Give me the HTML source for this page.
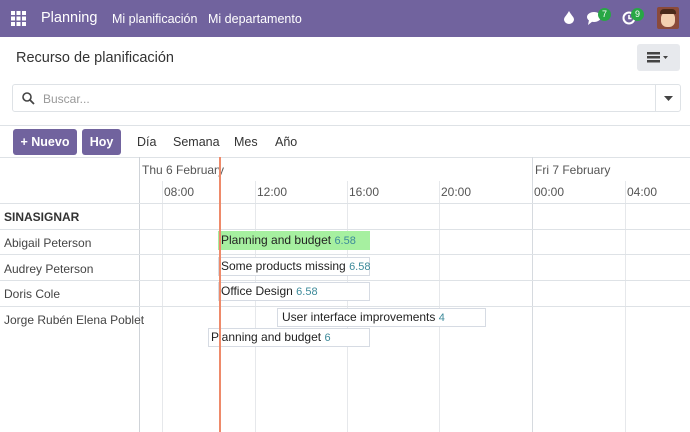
<!DOCTYPE html>
<html><head><meta charset="utf-8"><style>
*{box-sizing:border-box;margin:0;padding:0}
body{width:690px;height:432px;overflow:hidden;font-family:"Liberation Sans",sans-serif;background:#fff;position:relative;color:#333}
.a{position:absolute}
.nav{left:0;top:0;width:690px;height:37px;background:#71639e;color:#fff}
.hl{background:#dee2e6}
.vl{width:1px;background:#e6e8eb;top:181px;height:251px}
.bar{position:absolute;height:19px;border:1px solid #d6dbe3;background:#fff;font-size:12px;line-height:17px;padding-left:2px;white-space:nowrap;color:#222}
.bar b{font-weight:normal;color:#3d8a9a;font-size:11px}
.name{position:absolute;left:4px;font-size:12px;color:#444}
.badge{position:absolute;background:#28a745;color:#fff;font-size:9px;border-radius:7px;width:13px;height:13px;text-align:center;line-height:13px}
</style></head><body>
<div class="a nav">
 <svg class="a" style="left:11px;top:11px" width="15" height="15" viewBox="0 0 15 15" fill="#fff"><rect x="0" y="0" width="4" height="4"/><rect x="5.5" y="0" width="4" height="4"/><rect x="11" y="0" width="4" height="4"/><rect x="0" y="5.5" width="4" height="4"/><rect x="5.5" y="5.5" width="4" height="4"/><rect x="11" y="5.5" width="4" height="4"/><rect x="0" y="11" width="4" height="4"/><rect x="5.5" y="11" width="4" height="4"/><rect x="11" y="11" width="4" height="4"/></svg>
 <div class="a" style="left:41px;top:10px;font-size:14.5px">Planning</div>
 <div class="a" style="left:112px;top:12px;font-size:12.5px">Mi planificación</div>
 <div class="a" style="left:208px;top:12px;font-size:12.5px">Mi departamento</div>
 <svg class="a" style="left:564px;top:11px" width="10" height="13" viewBox="0 0 10 13"><path d="M5 0C3 4 0 6 0 8.5A5 4.5 0 0 0 10 8.5C10 6 7 4 5 0Z" fill="#fff"/></svg>
 <svg class="a" style="left:587px;top:11px" width="17" height="15" viewBox="0 0 17 15"><ellipse cx="7" cy="6" rx="7" ry="5" fill="#fff"/><path d="M2 9L1 14L6 10Z" fill="#fff"/></svg>
 <div class="badge" style="left:598px;top:8px">7</div>
 <svg class="a" style="left:622px;top:11px" width="14" height="14" viewBox="0 0 14 14"><circle cx="7" cy="7" r="5.5" fill="none" stroke="#fff" stroke-width="2"/><path d="M7 4V7.5H9.5" stroke="#fff" stroke-width="1.6" fill="none"/></svg>
 <div class="badge" style="left:631px;top:8px">9</div>
 <div class="a" style="left:657px;top:7px;width:22px;height:22px;background:#8a4a3a;border-radius:2px">
  <div class="a" style="left:4px;top:5px;width:14px;height:15px;background:#f3d0b0;border-radius:6px"></div>
  <div class="a" style="left:3px;top:2px;width:16px;height:5px;background:#4a2a1a;border-radius:4px 4px 0 0"></div>
 </div>
</div>
<div class="a" style="left:16px;top:50px;font-size:14.5px;color:#333">Recurso de planificación</div>
<div class="a" style="left:637px;top:44px;width:43px;height:27px;background:#e7e9ed;border-radius:3px">
 <svg class="a" style="left:10px;top:8px" width="22" height="11" viewBox="0 0 22 11"><rect x="0" y="0" width="13" height="2.5" fill="#444"/><rect x="0" y="4" width="13" height="2.5" fill="#444"/><rect x="0" y="8" width="13" height="2.5" fill="#444"/><path d="M16 4H21L18.5 7Z" fill="#444"/></svg>
</div>
<div class="a" style="left:12px;top:84px;width:669px;height:28px;border:1px solid #dee2e6;border-radius:3px">
 <svg class="a" style="left:9px;top:7px" width="13" height="13" viewBox="0 0 13 13"><circle cx="5" cy="5" r="4" fill="none" stroke="#444" stroke-width="1.6"/><path d="M8 8L12 12" stroke="#444" stroke-width="1.8"/></svg>
 <div class="a" style="left:30px;top:7px;font-size:12px;color:#999">Buscar...</div>
 <div class="a" style="left:642px;top:0;width:1px;height:26px;background:#dee2e6"></div>
 <svg class="a" style="left:651px;top:11px" width="9" height="5"><path d="M0 0H9L4.5 5Z" fill="#444"/></svg>
</div>
<div class="a" style="left:0;top:125px;width:690px;height:1px;background:#dee2e6"></div>
<div class="a" style="left:13px;top:129px;width:64px;height:26px;background:#71639e;border-radius:3px;color:#fff;font-size:12.5px;font-weight:bold;line-height:26px;text-align:center">+ Nuevo</div>
<div class="a" style="left:82px;top:129px;width:39px;height:26px;background:#71639e;border-radius:3px;color:#fff;font-size:12.5px;font-weight:bold;line-height:26px;text-align:center">Hoy</div>
<div class="a" style="left:137px;top:135px;font-size:12.5px">Día</div>
<div class="a" style="left:173px;top:135px;font-size:12.5px">Semana</div>
<div class="a" style="left:234px;top:135px;font-size:12.5px">Mes</div>
<div class="a" style="left:275px;top:135px;font-size:12.5px">Año</div>
<div class="a hl" style="left:0;top:157px;width:690px;height:1px"></div>
<div class="a vl" style="left:162px"></div>
<div class="a vl" style="left:255px"></div>
<div class="a vl" style="left:347px"></div>
<div class="a vl" style="left:439px"></div>
<div class="a vl" style="left:625px"></div>
<div class="a" style="left:139px;top:157px;width:1px;height:275px;background:#cfd3d8"></div>
<div class="a" style="left:532px;top:157px;width:1px;height:275px;background:#d6dadf"></div>
<div class="a" style="left:142px;top:163px;font-size:12px;color:#555">Thu 6 February</div>
<div class="a" style="left:535px;top:163px;font-size:12px;color:#555">Fri 7 February</div>
<div class="a" style="left:164px;top:185px;font-size:12px;color:#555">08:00</div>
<div class="a" style="left:257px;top:185px;font-size:12px;color:#555">12:00</div>
<div class="a" style="left:349px;top:185px;font-size:12px;color:#555">16:00</div>
<div class="a" style="left:441px;top:185px;font-size:12px;color:#555">20:00</div>
<div class="a" style="left:534px;top:185px;font-size:12px;color:#555">00:00</div>
<div class="a" style="left:627px;top:185px;font-size:12px;color:#555">04:00</div>
<div class="a hl" style="left:0;top:203px;width:690px;height:1px"></div>
<div class="a hl" style="left:0;top:229px;width:690px;height:1px"></div>
<div class="a hl" style="left:0;top:254px;width:690px;height:1px"></div>
<div class="a hl" style="left:0;top:280px;width:690px;height:1px"></div>
<div class="a hl" style="left:0;top:306px;width:690px;height:1px"></div>
<div class="name" style="top:210px;font-weight:bold;color:#333">SINASIGNAR</div>
<div class="name" style="top:236px">Abigail Peterson</div>
<div class="name" style="top:262px">Audrey Peterson</div>
<div class="name" style="top:287px">Doris Cole</div>
<div class="name" style="top:313px">Jorge Rubén Elena Poblet</div>
<div class="bar" style="left:218px;top:231px;width:152px;background:#a6f0a0;border-color:#a6f0a0">Planning and budget <b>6.58</b></div>
<div class="bar" style="left:218px;top:257px;width:152px">Some products missing <b>6.58</b></div>
<div class="bar" style="left:218px;top:282px;width:152px">Office Design <b>6.58</b></div>
<div class="bar" style="left:277px;top:308px;width:209px;padding-left:4px">User interface improvements <b>4</b></div>
<div class="bar" style="left:208px;top:328px;width:162px">Planning and budget <b>6</b></div>
<div class="a" style="left:219px;top:157px;width:2px;height:275px;background:#ee8a6a"></div>
</body></html>
